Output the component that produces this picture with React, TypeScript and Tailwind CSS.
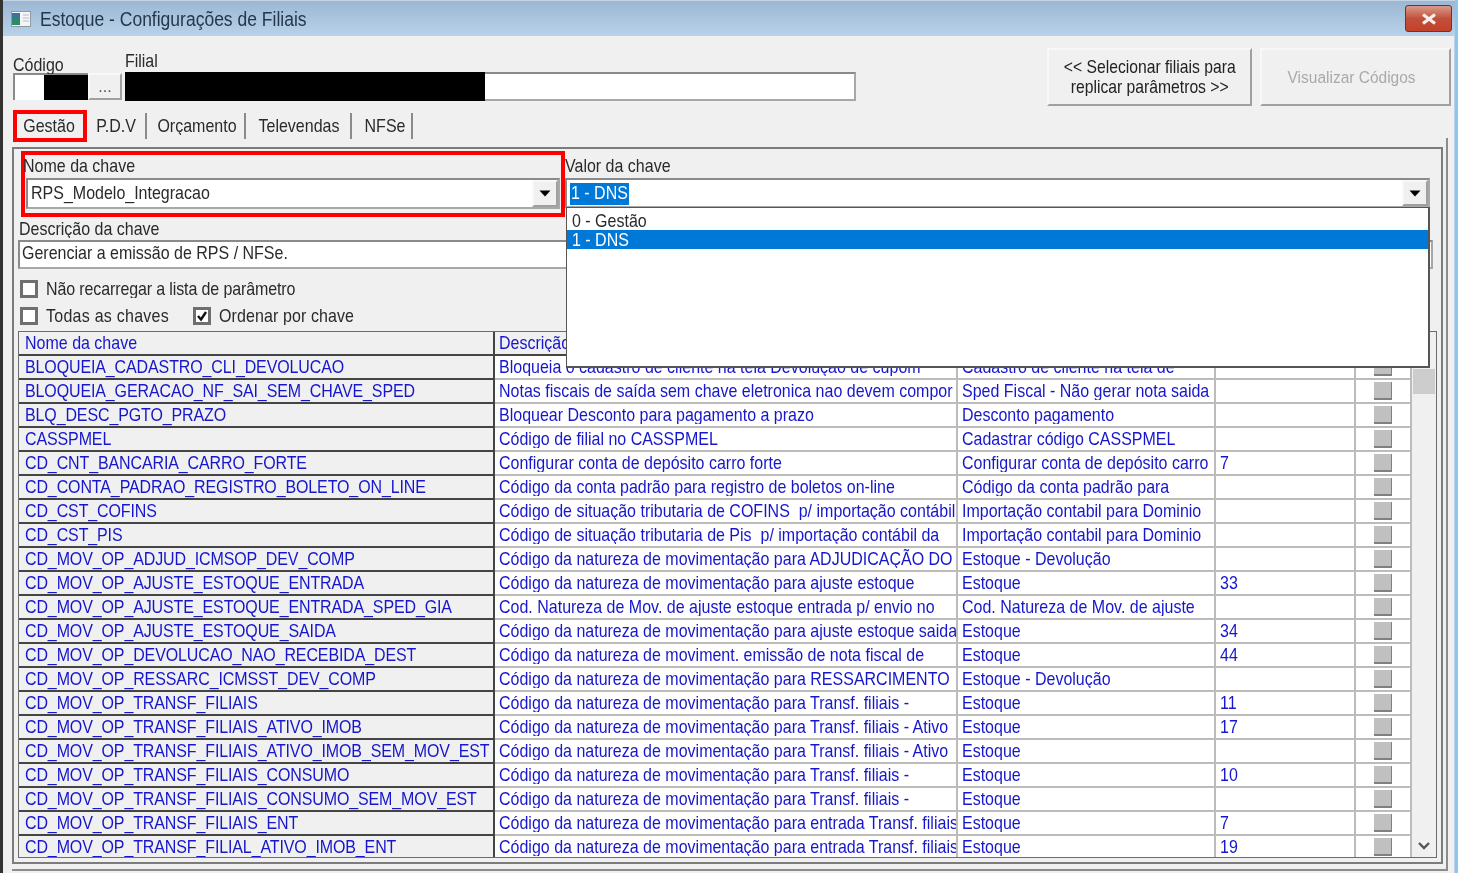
import React from "react";

const rows: [string, string, string, string][] = [
  ["BLOQUEIA_CADASTRO_CLI_DEVOLUCAO", "Bloqueia o cadastro de cliente na tela Devolução de cupom", "Cadastro de cliente na tela de", ""],
  ["BLOQUEIA_GERACAO_NF_SAI_SEM_CHAVE_SPED", "Notas fiscais de saída sem chave eletronica nao devem compor", "Sped Fiscal - Não gerar nota saida", ""],
  ["BLQ_DESC_PGTO_PRAZO", "Bloquear Desconto para pagamento a prazo", "Desconto pagamento", ""],
  ["CASSPMEL", "Código de filial no CASSPMEL", "Cadastrar código CASSPMEL", ""],
  ["CD_CNT_BANCARIA_CARRO_FORTE", "Configurar conta de depósito carro forte", "Configurar conta de depósito carro", "7"],
  ["CD_CONTA_PADRAO_REGISTRO_BOLETO_ON_LINE", "Código da conta padrão para registro de boletos on-line", "Código da conta padrão para", ""],
  ["CD_CST_COFINS", "Código de situação tributaria de COFINS  p/ importação contábil", "Importação contabil para Dominio", ""],
  ["CD_CST_PIS", "Código de situação tributaria de Pis  p/ importação contábil da", "Importação contabil para Dominio", ""],
  ["CD_MOV_OP_ADJUD_ICMSOP_DEV_COMP", "Código da natureza de movimentação para ADJUDICAÇÃO DO", "Estoque - Devolução", ""],
  ["CD_MOV_OP_AJUSTE_ESTOQUE_ENTRADA", "Código da natureza de movimentação para ajuste estoque", "Estoque", "33"],
  ["CD_MOV_OP_AJUSTE_ESTOQUE_ENTRADA_SPED_GIA", "Cod. Natureza de Mov. de ajuste estoque entrada p/ envio no", "Cod. Natureza de Mov. de ajuste", ""],
  ["CD_MOV_OP_AJUSTE_ESTOQUE_SAIDA", "Código da natureza de movimentação para ajuste estoque saida", "Estoque", "34"],
  ["CD_MOV_OP_DEVOLUCAO_NAO_RECEBIDA_DEST", "Código da natureza de moviment. emissão de nota fiscal de", "Estoque", "44"],
  ["CD_MOV_OP_RESSARC_ICMSST_DEV_COMP", "Código da natureza de movimentação para RESSARCIMENTO", "Estoque - Devolução", ""],
  ["CD_MOV_OP_TRANSF_FILIAIS", "Código da natureza de movimentação para Transf. filiais -", "Estoque", "11"],
  ["CD_MOV_OP_TRANSF_FILIAIS_ATIVO_IMOB", "Código da natureza de movimentação para Transf. filiais - Ativo", "Estoque", "17"],
  ["CD_MOV_OP_TRANSF_FILIAIS_ATIVO_IMOB_SEM_MOV_EST", "Código da natureza de movimentação para Transf. filiais - Ativo", "Estoque", ""],
  ["CD_MOV_OP_TRANSF_FILIAIS_CONSUMO", "Código da natureza de movimentação para Transf. filiais -", "Estoque", "10"],
  ["CD_MOV_OP_TRANSF_FILIAIS_CONSUMO_SEM_MOV_EST", "Código da natureza de movimentação para Transf. filiais -", "Estoque", ""],
  ["CD_MOV_OP_TRANSF_FILIAIS_ENT", "Código da natureza de movimentação para entrada Transf. filiais", "Estoque", "7"],
  ["CD_MOV_OP_TRANSF_FILIAL_ATIVO_IMOB_ENT", "Código da natureza de movimentação para entrada Transf. filiais", "Estoque", "19"],
];

const sunken = "border-2 border-t-[#8a8a8a] border-l-[#8a8a8a] border-r-[#a8a8a8] border-b-[#a8a8a8]";
const raised = "border-2 border-t-[#f8f8f8] border-l-[#f8f8f8] border-r-[#a0a0a0] border-b-[#a0a0a0]";

function T({ children }: { children: React.ReactNode }) {
  return <span className="inline-block scale-y-[1.12]">{children}</span>;
}

function Arrow() {
  return (
    <div className={`w-[26px] shrink-0 bg-[#f0f0f0] flex items-center justify-center ${raised}`}>
      <svg width="12" height="7" viewBox="0 0 12 7"><path d="M0.5 0.5h11L6 6.5z" fill="#000" /></svg>
    </div>
  );
}

function Check({ on, label, className }: { on?: boolean; label: string; className?: string }) {
  return (
    <div className={`flex items-center gap-[8px] h-[20px] ${className ?? ""}`}>
      <div className="w-[18px] h-[18px] bg-white border-[3px] border-[#6f6f6f] flex items-center justify-center">
        {on && (
          <svg width="12" height="12" viewBox="0 0 12 12"><path d="M2 6l3 3.5L10 2" fill="none" stroke="#111" strokeWidth="2.4" /></svg>
        )}
      </div>
      <T>{label}</T>
    </div>
  );
}

function Tab({ label, w }: { label: string; w: string }) {
  return (
    <div className={`h-[26px] flex items-center justify-center border-r-2 border-r-[#8a8a8a] ${w}`}><T>{label}</T></div>
  );
}

const cols = "grid grid-cols-[476px_463px_258px_140px_56px]";

export default function App() {
  return (
    <div className="w-[1458px] h-[873px] overflow-hidden bg-[#b9d1ea] flex flex-col text-[16px] leading-[20px] text-[#2a2a2a] border-l-[3px] border-l-[#333] border-r-[3px] border-r-[#8fc4ec] font-['Liberation_Sans',sans-serif] blur-[0.35px]">
      {/* title bar */}
      <div className="h-[36px] shrink-0 bg-gradient-to-b from-[#9cb7d3] to-[#b9d2ea] flex items-center pl-[8px] pr-[3px] border-t border-t-[#c4d4e4]">
        <svg width="20" height="16" viewBox="0 0 20 16" className="mr-[9px]">
          <rect x="0.5" y="0.5" width="19" height="15" fill="#f4f6f6" stroke="#8d9aa6" />
          <rect x="1" y="2" width="8" height="12" fill="#2c8a6a" />
          <rect x="1" y="2" width="8" height="5" fill="#3d6fa8" />
          <path d="M12 4h6M12 7h6M12 10h6" stroke="#b4bcc4" />
        </svg>
        <span className="text-[17.5px] text-[#24384c] inline-block scale-y-[1.12]">Estoque - Configurações de Filiais</span>
        <div className="ml-auto w-[47px] h-[27px] rounded-[3px] border border-[#5a3a3a] bg-gradient-to-b from-[#d99a8c] via-[#c0503a] to-[#c4402a] flex items-center justify-center">
          <svg width="18" height="12" viewBox="0 0 18 12"><path d="M3 1.5l12 9M15 1.5l-12 9" stroke="#f4eeee" strokeWidth="3.2" /></svg>
        </div>
      </div>

      {/* body */}
      <div className="flex-1 min-h-0 bg-[#f0f0f0] mr-[1px] flex flex-col pl-[10px] pr-[3px]">
        {/* header form */}
        <div className="h-[72px] shrink-0 flex">
          <div className="w-[75px] pt-[19px]">
            <div className="h-[18px]"><T>Código</T></div>
            <div className={`h-[27px] bg-white flex justify-end ${sunken} border-r-0 border-b-0`}>
              <div className="w-[44px] bg-black" />
            </div>
          </div>
          <div className={`w-[34px] h-[27px] mt-[37px] mr-[3px] flex items-center justify-center text-[#555] ${raised}`}>...</div>
          <div className="w-[732px] pt-[15px]">
            <div className="h-[21px]"><T>Filial</T></div>
            <div className={`h-[29px] bg-white ${sunken} border-l-0`}>
              <div className="w-[360px] h-[29px] -mt-[2px] bg-black" />
            </div>
          </div>
          <div className={`ml-[191px] mt-[12px] w-[205px] h-[58px] flex flex-col items-center justify-center text-center text-[15.7px] text-[#222] ${raised}`}>
            <div><T>&lt;&lt; Selecionar filiais para</T></div>
            <div><T>replicar parâmetros &gt;&gt;</T></div>
          </div>
          <div className={`ml-[8px] mt-[12px] w-[191px] h-[58px] flex items-center justify-center pr-[8px] text-[15.5px] text-[#a9a9a9] ${raised}`}><T>Visualizar Códigos</T></div>
        </div>

        {/* tabs */}
        <div className="h-[35px] shrink-0 flex items-center">
          <div className="w-[74px] h-[32px] border-[4px] border-[#ff0000] flex items-center justify-center pr-[2px]"><T>Gestão</T></div>
          <Tab label="P.D.V" w="w-[60px]" />
          <Tab label="Orçamento" w="w-[99px] pl-[3px]" />
          <Tab label="Televendas" w="w-[106px] pl-[2px]" />
          <Tab label="NFSe" w="w-[61px] pl-[7px]" />
        </div>

        {/* tab page */}
        <div className="h-[733px] shrink-0 -mt-[5px] -ml-[1px] w-[1436px] border-r-2 border-b-2 border-[#8c8c8c] pr-[3px] pt-[9px]">
          <div className="h-[717px] border-2 border-[#7c7c7c] pl-[4px] pr-[4px] pb-[4px] flex flex-col">
            <div className="flex h-[68px] shrink-0 mt-[2px]">
              <div className="w-[544px] ml-[3px] h-[66px] border-[4px] border-[#ff0000] px-[1px] shrink-0">
                <div className="h-[23px] pt-[1px] -ml-[3px]"><T>Nome da chave</T></div>
                <div className={`h-[31px] bg-white flex ${sunken}`}>
                  <div className="flex-1 pl-[3px] pt-[3px]"><T>RPS_Modelo_Integracao</T></div>
                  <Arrow />
                </div>
              </div>
              <div className="flex-1 min-w-0 pt-[5px] relative">
                <div className="h-[22px]"><T>Valor da chave</T></div>
                <div className={`h-[30px] bg-white flex mr-[7px] ${sunken}`}>
                  <div className="flex-1 pl-[3px] pt-[3px]">
                    <span className="inline-block bg-[#0078d7] text-white h-[22px] px-px"><T>1 - DNS</T></span>
                  </div>
                  <Arrow />
                </div>
                {/* open dropdown list */}
                <div className="absolute z-10 top-[56px] left-[1px] right-[7px] h-[161px] bg-white border border-[#555] border-r-2 border-b-2 flex flex-col">
                  <div className="h-[19px] pl-[5px] mt-[3px]"><T>0 - Gestão</T></div>
                  <div className="h-[19px] pl-[5px] bg-[#0078d7] text-white"><T>1 - DNS</T></div>
                </div>
              </div>
            </div>

            <div className="h-[20px] shrink-0 ml-[1px]"><T>Descrição da chave</T></div>
            <div className={`h-[29px] shrink-0 mt-[1px] bg-white pl-[2px] pt-[1px] mr-[4px] ${sunken}`}><T>Gerenciar a emissão de RPS / NFSe.</T></div>

            <Check label="Não recarregar a lista de parâmetro" className="mt-[10px] ml-[2px] shrink-0 tracking-[-0.12px]" />
            <div className="flex mt-[7px] ml-[2px] shrink-0">
              <Check label="Todas as chaves" className="w-[173px] tracking-[0.25px]" />
              <Check on label="Ordenar por chave" className="tracking-[0.1px]" />
            </div>

            {/* grid */}
            <div className="mt-[5px] flex-1 min-h-0 flex border border-[#6c6c6c] overflow-hidden">
              <div className="w-[1393px] shrink-0 flex flex-col">
                <div className={`h-[24px] shrink-0 ${cols} text-[#1616cc]`}>
                  <div className="pl-[6px] pt-[1px] border-r-2 border-r-[#444] border-b-2 border-b-[#444]"><T>Nome da chave</T></div>
                  <div className="pl-[4px] pt-[1px] border-b-2 border-b-[#444] whitespace-nowrap overflow-hidden"><T>Descrição da chave</T></div>
                  <div />
                  <div />
                  <div />
                </div>
                {rows.map((r, i) => (
                  <div key={i} className={`h-[24px] shrink-0 ${cols} text-[#1616cc] whitespace-pre`}>
                    <div className="pl-[6px] pt-[1px] overflow-hidden bg-[#f0f0f0] border-r-2 border-r-[#444] border-b-2 border-b-[#444] tracking-[-0.12px]"><T>{r[0]}</T></div>
                    <div className="pl-[4px] pt-[1px] overflow-hidden bg-white border-r-2 border-b-2 border-[#bcbcbc]"><T>{r[1]}</T></div>
                    <div className="pl-[4px] pt-[1px] overflow-hidden bg-white border-r-2 border-b-2 border-[#bcbcbc]"><T>{r[2]}</T></div>
                    <div className="pl-[4px] pt-[1px] overflow-hidden bg-white border-r-2 border-b-2 border-[#bcbcbc]">{r[3] ? <T>{r[3]}</T> : null}</div>
                    <div className="bg-white border-r-2 border-b-2 border-[#bcbcbc] flex items-center justify-center">
                      <div className="w-[18px] h-[18px] bg-[#c0c0c0] border-r border-b-2 border-[#808080]" />
                    </div>
                  </div>
                ))}
              </div>
              <div className="flex-1 bg-[#f0f0f0] flex flex-col items-center justify-between">
                <div className="w-[22px] h-[25px] mt-[37px] bg-[#cdcdcd]" />
                <svg width="14" height="10" viewBox="0 0 14 10" className="mb-[6px]">
                  <path d="M2 2l5 5 5-5" fill="none" stroke="#555" strokeWidth="2.4" />
                </svg>
              </div>
            </div>
          </div>
        </div>
      </div>
    </div>
  );
}
